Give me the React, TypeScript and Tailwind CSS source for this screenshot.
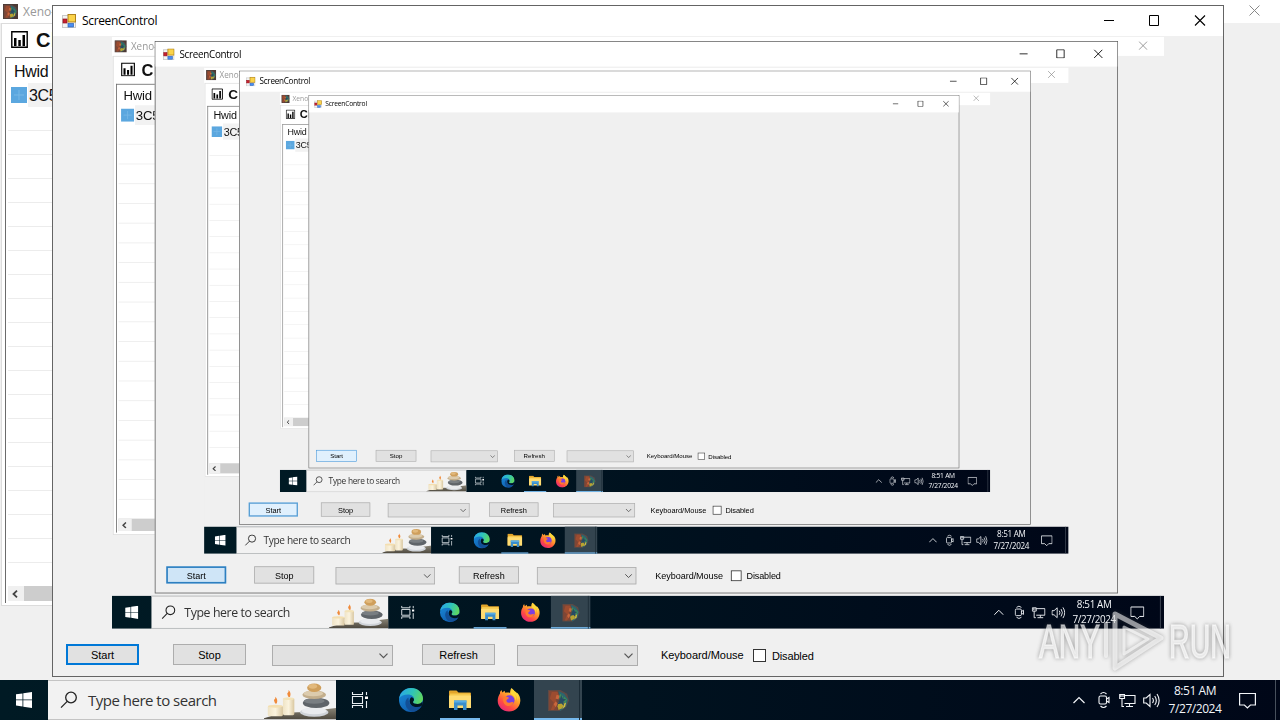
import type { ReactNode } from "react";

const NESTING = 3;
const ROWS = Array.from({ length: 20 }, (_, i) => i);

function FormIcon() {
  return (
    <svg width="14" height="14" viewBox="0 0 14 14" className="shrink-0">
      <rect x="0.5" y="1.5" width="13" height="12" fill="#f4f4f4" stroke="#c9c9c9" />
      <rect x="1" y="5" width="4" height="4" fill="#c8202f" stroke="#8d1420" strokeWidth="0.7" />
      <rect x="6" y="0.5" width="7.5" height="7.5" fill="#fbd34a" stroke="#a87a12" strokeWidth="0.9" />
      <rect x="6" y="9.5" width="5.5" height="3.5" fill="#4b8df0" stroke="#2c62b8" strokeWidth="0.7" />
    </svg>
  );
}

function XenoIcon({ size, tile = "none", className }: { size: number; tile?: string; className?: string }) {
  return (
    <svg width={size} height={size} viewBox="0 0 24 24" className={className}>
      <path d="M0 0h24v24H0z" fill={tile} />
      <path d="M1 1h13l7 4 2 7-3 7-6 4H1z" fill="#5d4a45" />
      <path d="M2 2h9v20H2z" fill="#7f4635" />
      <path d="M5 3h6l2 5-4 3 2 5-4 6H4l3-8-4-4z" fill="#9c4c30" />
      <path d="M12 2l6 3 4 6-2 7-6 5-3-6 3-6z" fill="#2b6570" />
      <path d="M14 5l3 3-3 3-2-3zM18 8l3 3-2 4-3-3z" fill="#3f8a58" />
      <path d="M12 14l3-2 3 3-2 5-4 2-1-4z" fill="#b9a22f" />
      <path d="M15 6l1 4 4 1-3 2 1 5-3-3-4 1 2-4z" fill="#274b63" />
      <path d="M10 6l3 1-1 4-3-1zM9 13l2 2-2 4-2-3z" fill="#c8663c" />
      <path d="M18 15l2-1-1 4-3 3z" fill="#d3bb3c" />
    </svg>
  );
}

function EdgeIcon() {
  return (
    <svg width="24" height="24" viewBox="0 0 24 24">
      <defs>
        <linearGradient id="edge-top" x1="0" y1="0.3" x2="1" y2="0.6">
          <stop offset="0" stopColor="#2aa6e8" />
          <stop offset="0.5" stopColor="#2fc4b8" />
          <stop offset="1" stopColor="#62d85a" />
        </linearGradient>
        <linearGradient id="edge-body" x1="0" y1="0" x2="0.6" y2="1">
          <stop offset="0" stopColor="#1b8fdc" />
          <stop offset="1" stopColor="#0f5cae" />
        </linearGradient>
      </defs>
      <circle cx="12" cy="12" r="12" fill="url(#edge-body)" />
      <path d="M.2 10.500C1 4.500 6 0 12 0c7 0 12 5 12 10.500 0 3.500-2.500 5.500-5.500 5.500-3 0-4.500-1-4.500-2 0-.7 1-1 1-3 0-2.200-2.300-4.500-6-4.500C5 6.500 1.500 8 .2 10.500z" fill="url(#edge-top)" />
      <path d="M9.500 9.500C7 11 6 13.500 6.500 16.500 7.200 20.500 10 23 13.500 23.900 17.500 23.500 20.800 21 22.600 18c-2.600 1.300-5.600 1.500-8.600.2-3.200-1.400-4.700-4.200-4.500-8.700z" fill="#124f96" />
      <path d="M12.200 9.300c1.600.2 2.800 1.200 2.800 2.500 0 1-.9 1.500-1 2.200-.1 1 1.400 2 4.500 2 2 0 3.700-.8 4.700-2.200l.4 1.300c-.2 1-.6 2-1 2.900-2.600 1.300-5.600 1.500-8.600.2C10.600 16.800 9.400 12 12.200 9.300z" fill="#001522" />
    </svg>
  );
}

function ExplorerIcon() {
  return (
    <svg width="22" height="20" viewBox="0 0 22 20">
      <path d="M0 1.500Q0 .5 1 .5h6.500l2 2H21q1 0 1 1V17H0z" fill="#e2a52a" />
      <path d="M1 3.500h20V17H1z" fill="#f6c84c" />
      <path d="M0 5.500h22V18H0z" fill="#ffdc72" />
      <path d="M5 10.500h12.500V20H14v-4.500H8.500V20H5z" fill="#3b8ecb" />
      <path d="M5 10.500h12.500v2H5z" fill="#5aaee4" />
    </svg>
  );
}

function FirefoxIcon() {
  return (
    <svg width="24" height="24" viewBox="0 0 24 24">
      <defs>
        <linearGradient id="fox" x1="0.85" y1="0.05" x2="0.2" y2="1">
          <stop offset="0" stopColor="#ffe94a" />
          <stop offset="0.4" stopColor="#ff9b2b" />
          <stop offset="0.7" stopColor="#ff4a45" />
          <stop offset="1" stopColor="#e2247f" />
        </linearGradient>
      </defs>
      <path d="M14.500 0c2 1.500 3 3 3.300 4.700 1 .4 1.500 1 2 1.600l.5-1.500C22.500 7 23.500 10 23.300 13c-.4 6-5 10.500-11.300 10.500S.7 19 .7 12.800c0-3 1-5.600 2.300-7.300V4l1.500-2 .8 2.500 2.200-1.700.8 2C10 4.500 12 4.500 13 5c.2-2 .5-3.600 1.500-5z" fill="url(#fox)" />
      <circle cx="12.500" cy="12.300" r="5" fill="#7b3fe0" />
      <path d="M6.500 9.500c2-1.200 4-.8 5.500.3-.3 1.300-2 1.300-2.500 2.500-.3 1.500 1 2.700 3 2.400 1.500-.2 2.500-1 4-.4-1 3-3.500 4.200-6 3.700-3.500-.8-5.300-4.500-4-8.500z" fill="#ff7a2f" />
      <path d="M14 6c2.500 1 4.500 3.500 4.300 6.500 1-1.500 1-4-.5-6C19.500 7 21 10 20.500 13c1.500-3 1-6-1-8.500L15.500 1.500C14 3 13.600 4.500 14 6z" fill="#ffd83a" />
    </svg>
  );
}

function Candles() {
  return (
    <svg width="72" height="36" viewBox="2 0 76 38">
      <defs>
        <linearGradient id="table" x1="0" y1="0" x2="0" y2="1">
          <stop offset="0" stopColor="#8a8577" />
          <stop offset="1" stopColor="#4f4a40" />
        </linearGradient>
        <linearGradient id="wax" x1="0" y1="0" x2="1" y2="0">
          <stop offset="0" stopColor="#efe3c5" />
          <stop offset="0.5" stopColor="#fbf3de" />
          <stop offset="1" stopColor="#d9c7a0" />
        </linearGradient>
      </defs>
      <path d="M0 38Q20 30 42 31L80 26V38z" fill="url(#table)" />
      <rect x="22" y="16" width="12" height="18" rx="1.500" fill="url(#wax)" />
      <ellipse cx="28" cy="16.500" rx="6" ry="1.500" fill="#f3e3b8" />
      <rect x="6" y="24" width="16" height="11" rx="1.500" fill="url(#wax)" />
      <ellipse cx="14" cy="24.500" rx="8" ry="1.500" fill="#f4dfb0" />
      <path d="M26.500 11q2-1.500 1.500-3.500 3 3 1.500 7-2 1.500-3-3.500zM12.500 18q2-1.500 1.500-3.500 3 3 1.500 7-2 1.500-3-3.500z" fill="#f08a3a" />
      <ellipse cx="55" cy="31" rx="15" ry="4.500" fill="#cfd3d8" />
      <ellipse cx="55" cy="29.500" rx="13" ry="3.500" fill="#e9ebee" />
      <ellipse cx="57" cy="21" rx="14" ry="5.500" fill="#5f6469" />
      <ellipse cx="55" cy="19" rx="11" ry="3" fill="#797e82" />
      <ellipse cx="55" cy="12.500" rx="12.500" ry="4.500" fill="#c3ae8c" />
      <ellipse cx="54" cy="11" rx="10.500" ry="3" fill="#dccbad" />
      <ellipse cx="55" cy="5" rx="7.500" ry="4.500" fill="#cf9f5c" />
      <ellipse cx="53.500" cy="3.500" rx="4.500" ry="2.500" fill="#e2b97c" />
    </svg>
  );
}

function TaskButton({ children, className = "" }: { children: ReactNode; className?: string }) {
  return <div className={`relative flex h-full w-12 items-center justify-center ${className}`}>{children}</div>;
}

function Taskbar() {
  return (
    <div className="flex h-10 shrink-0 items-stretch bg-linear-to-r from-[#001a24] via-[#00121f] to-[#000718]">
      <div className="flex w-12 items-center justify-center">
        <svg width="16" height="16" viewBox="0 0 16 16" fill="#fff">
          <path d="M0 2.300l6.500-.9v6.100H0zM7.300 1.300L16 0v7.500H7.300zM0 8.300h6.500v6.200L0 13.600zM7.300 8.300H16V16l-8.700-1.300z" />
        </svg>
      </div>
      <div className="flex w-72 items-center border-y border-[#c4c4c4] bg-[#f2f2f2]">
        <svg width="18" height="18" viewBox="0 0 18 18" fill="none" stroke="#222" strokeWidth="1.300" className="ml-[12px]">
          <circle cx="11" cy="6.500" r="5.300" />
          <path d="M7.200 10.400L1 16.600" />
        </svg>
        <span className="ml-[10px] whitespace-nowrap font-['Open_Sans',sans-serif] text-[15px] tracking-[-0.500px] text-[#333]">
          Type here to search
        </span>
        <div className="ml-auto self-end">
          <Candles />
        </div>
      </div>
      <TaskButton>
        <svg width="17" height="16" viewBox="0 0 17 16" fill="none" stroke="#e8eef2" strokeWidth="1.100" className="mr-px">
          <path d="M1.500 0v2.500h10V0M1.500 16v-2.500h10V16M1.500 4.500h10v7h-10zM15.500 0v3M15.500 9v7" />
          <path d="M14 4.500h3v2.500h-3z" fill="#fff" stroke="none" />
        </svg>
      </TaskButton>
      <TaskButton className="ml-[3px]"><EdgeIcon /></TaskButton>
      <TaskButton className="ml-px">
        <ExplorerIcon />
        <div className="absolute bottom-0 left-1 h-0.5 w-10 bg-[#76b9ed]" />
      </TaskButton>
      <TaskButton className="ml-px"><FirefoxIcon /></TaskButton>
      <TaskButton className="ml-px bg-[#33444f]">
        <XenoIcon size={23} />
        <div className="absolute bottom-0 left-0 h-0.5 w-full bg-[#76b9ed]" />
        <div className="absolute right-0.5 top-0 h-full w-px bg-[#1b2b36]" />
      </TaskButton>
      <div className="ml-auto flex items-center text-[#f2f5f8]">
        <svg width="12" height="8" viewBox="0 0 12 8" fill="none" stroke="currentColor" strokeWidth="1.200">
          <path d="M.5 7L6 1.500 11.500 7" />
        </svg>
        <svg width="12" height="18" viewBox="0 0 12 18" fill="none" stroke="currentColor" strokeWidth="1.100" className="ml-[13px]">
          <path d="M2.500 3Q5.500 0 8.500 3M2.500 15Q5.500 18 8.500 15" />
          <rect x="1" y="5" width="7.500" height="8" rx="1.500" />
          <path d="M8.500 8l2.500-1.500v5L8.500 10" />
        </svg>
        <svg width="17" height="15" viewBox="0 0 17 15" fill="none" stroke="currentColor" strokeWidth="1.100" className="ml-[9px]">
          <path d="M5.500 2.500H16v8H5.500M10.500 10.500V13M7 13.500h7M.7 1.500h4.800v4H.7zM3 5.500v8h2M2 2v2M4 2v2" />
        </svg>
        <svg width="17" height="15" viewBox="0 0 17 15" fill="none" stroke="currentColor" strokeWidth="1.100" className="ml-[7px]">
          <path d="M.7 5v5h2.500L7 13.500v-12L3.200 5zM9.500 5q1.800 2.500 0 5M11.700 3q3.300 4.500 0 9M14 1q4.300 6.500 0 13" />
        </svg>
        <div className="ml-[7px] flex w-[56px] flex-col items-center whitespace-nowrap font-['Open_Sans',sans-serif] text-[12px] leading-[18px] tracking-[-0.450px]">
          <span>8:51 AM</span>
          <span>7/27/2024</span>
        </div>
        <svg width="17" height="17" viewBox="0 0 17 17" fill="none" stroke="currentColor" strokeWidth="1.200" className="ml-[16px]">
          <path d="M.6 1.500h15.800v11.500h-5l-3 3-3-3H.6z" />
        </svg>
        <div className="ml-[19px] h-10 w-px bg-[#47505c]" />
        <div className="w-1" />
      </div>
    </div>
  );
}

function XenoWindow() {
  return (
    <div className="flex h-[680px] flex-col font-['Liberation_Sans',sans-serif]">
      <div className="flex h-[23px] shrink-0 items-center bg-white">
        <XenoIcon size={15} tile="#4b3a35" className="ml-[3px]" />
        <span className="ml-[5px] font-['Open_Sans',sans-serif] text-[12px] text-[#999]">Xeno-rat</span>
        <svg width="11" height="11" viewBox="0 0 11 11" stroke="#888" className="mb-[3px] ml-auto mr-[20px]">
          <path d="M.5.5l10 10M10.500.5l-10 10" />
        </svg>
      </div>
      <div className="ml-px flex h-[583px] w-40 flex-col border border-[#dcdcdc] bg-white">
        <div className="flex h-[33px] shrink-0 items-center pb-0.5 pl-[9px]">
          <svg width="17" height="17" viewBox="0 0 17 17">
            <path d="M.8.8h15.400v15.400H.8z" fill="none" stroke="#000" strokeWidth="1.400" />
            <path d="M3 7h2.500v8H3zM7.300 9h2.500v6H7.300zM11.500 4H14v11h-2.500z" />
          </svg>
          <span className="ml-[8px] text-[20px] font-bold tracking-[0.500px] text-[#111]">Clients</span>
        </div>
        <div className="ml-[3px] flex h-[546px] flex-col border-l border-t border-[#6b6b6b] pl-0.5">
          <div className="flex h-[25px] shrink-0 items-center pl-[6px] pt-0.5 text-[16px] tracking-[-0.300px] text-[#111]">Hwid</div>
          <div className="flex h-6 shrink-0 items-center pl-[3px]">
            <svg width="16" height="16" viewBox="0 0 16 16">
              <path d="M0 0h16v16H0z" fill="#5ba7df" />
              <path d="M8 3v10M3 8h10" stroke="#78b8e6" strokeWidth="1" />
            </svg>
            <span className="ml-px flex h-6 flex-1 items-center bg-[#f2f2f2] pl-px pt-0.5 text-[16px] tracking-[-0.300px] text-[#111]">3C5B</span>
          </div>
          {ROWS.map((row) => (
            <div key={row} className={row === 19 ? "h-6 shrink-0" : "h-6 shrink-0 border-b border-[#ececec]"} />
          ))}
          <div className="-mt-px flex h-[15px] shrink-0 bg-[#cdcdcd]">
            <div className="flex w-4 items-center justify-center bg-[#f0f0f0] pr-0.5">
              <svg width="6" height="8" viewBox="0 0 6 8" fill="none" stroke="#444" strokeWidth="1.800">
                <path d="M5 .7L1.500 4 5 7.300" />
              </svg>
            </div>
          </div>
        </div>
      </div>
    </div>
  );
}

// the remote picture lags a little, so each level shows another hover state
const startStyles = [
  "border-2 border-[#0078d7] bg-[#e1e1e1]",
  "border-2 border-[#2d7fc0] bg-[#cfe5f7]",
  "border-2 border-[#5a9fd4] bg-[#e0f0fd]",
  "border border-[#3f93d8] bg-[#e0f0fd]",
];

function FormButton({ label, className }: { label: string; className: string }) {
  return <div className={`flex h-[21px] w-[73px] items-center justify-center pt-px ${className}`}>{label}</div>;
}

function Combo({ className }: { className: string }) {
  return (
    <div className={`mt-px flex h-[21px] w-[121px] items-center justify-end border border-[#adadad] bg-[#e1e1e1] pr-[4px] ${className}`}>
      <svg width="9" height="6" viewBox="0 0 9 6" fill="none" stroke="#555" strokeWidth="1.200">
        <path d="M.5.7l4 4 4-4" />
      </svg>
    </div>
  );
}

function ScreenControl({ depth }: { depth: number }) {
  return (
    <div className="absolute left-[52px] top-[5px] flex h-[672px] w-[1172px] flex-col border border-[#646464] bg-[#f0f0f0]">
      <div className="mb-px flex h-[30px] shrink-0 items-center bg-white pl-[9px]">
        <FormIcon />
        <span className="ml-[6px] font-['Open_Sans',sans-serif] text-[12px] tracking-[-0.350px] text-black">ScreenControl</span>
        <svg width="102" height="11" viewBox="0 0 102 11" fill="none" stroke="#000" className="mb-0.5 ml-auto mr-[17px]">
          <path d="M0 5.500h10M45.500.5h9v10h-9z" />
          <path d="M91 .5l10 10M101 .5l-10 10" strokeWidth="1.100" />
        </svg>
      </div>
      <div className="h-[592px] shrink-0 pl-[59px]">
        {depth < NESTING && (
          <div className="h-[592px] w-[1052px] overflow-hidden">
            <div className="origin-top-left scale-[0.8219] blur-[0.350px]">
              <Desktop depth={depth + 1} />
            </div>
          </div>
        )}
      </div>
      <div className="flex pl-[13px] pt-[15px] font-['Liberation_Sans',sans-serif] text-[11px] text-black">
        <FormButton label="Start" className={startStyles[depth]} />
        <FormButton label="Stop" className="ml-[34px] border border-[#adadad] bg-[#e1e1e1]" />
        <Combo className="ml-[26px]" />
        <FormButton label="Refresh" className="ml-[29px] border border-[#adadad] bg-[#e1e1e1]" />
        <Combo className="ml-[22px]" />
        <span className="ml-[23px] w-[92px] pt-px leading-[21px] tracking-[-0.050px]">Keyboard/Mouse</span>
        <div className="mt-[5px] size-[13px] border border-[#333] bg-white" />
        <span className="ml-[6px] pt-0.5 leading-[21px] tracking-[-0.150px]">Disabled</span>
      </div>
    </div>
  );
}

function Desktop({ depth }: { depth: number }) {
  return (
    <div className="relative flex h-[720px] w-[1280px] flex-col overflow-hidden bg-[#f0f0f0]">
      <XenoWindow />
      <Taskbar />
      <ScreenControl depth={depth} />
    </div>
  );
}

function Watermark() {
  return (
    <div className="absolute left-[1034px] top-[606px]">
      <svg width="204" height="70" viewBox="0 0 204 70" className="opacity-85 drop-shadow-[0_0_2px_rgba(70,70,70,0.75)]">
        <g fill="#fff" fillOpacity="0.75" stroke="#fff" strokeOpacity="0.6" strokeWidth="1.600" fontFamily="'Liberation Sans Narrow', 'Liberation Sans', sans-serif" fontSize="48">
          <text x="5" y="52" textLength="61" lengthAdjust="spacingAndGlyphs">ANY</text>
          <text x="135" y="52" textLength="62" lengthAdjust="spacingAndGlyphs">RUN</text>
        </g>
        <g fill="none" stroke="#fff" strokeOpacity="0.65" strokeLinejoin="round" strokeLinecap="round">
          <path d="M72 18V50" strokeWidth="4" />
          <path d="M110 57L81 64V8L127 31L101 46" strokeWidth="0" />
          <path d="M81 8L127 32L81 62Z" strokeWidth="5" />
          <path d="M90 21L114 33L90 48Z" strokeWidth="3" />
        </g>
      </svg>
    </div>
  );
}

export default function App() {
  return (
    <div className="relative h-[720px] w-[1280px] overflow-hidden">
      <Desktop depth={0} />
      <Watermark />
    </div>
  );
}
